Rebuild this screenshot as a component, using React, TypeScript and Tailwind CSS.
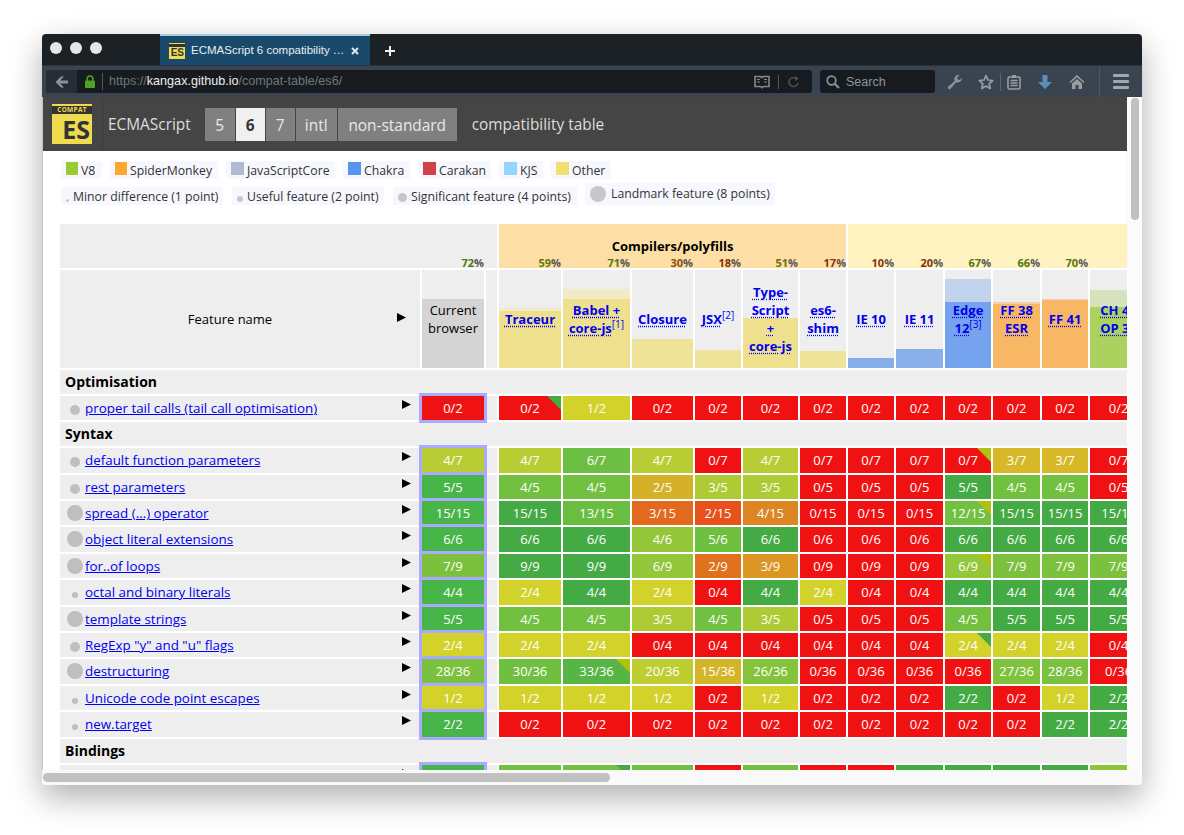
import { Fragment } from 'react'

type Dot = 'sm' | 'md' | 'lg'

type Column = {
	lines: string[]
	sup?: string
	solid: number
	light?: number
	barColor: string
	lightColor?: string
	percent?: number
}

const columns: Column[] = [
	{ lines: ['Traceur'], solid: 57, light: 60, barColor: '#eee08d', lightColor: '#f1ebc9', percent: 59 },
	{ lines: ['Babel +', 'core-js'], sup: '[1]', solid: 69, light: 79, barColor: '#eee08d', lightColor: '#f1ebc9', percent: 71 },
	{ lines: ['Closure'], solid: 29, barColor: '#eee399', percent: 30 },
	{ lines: ['JSX'], sup: '[2]', solid: 18, barColor: '#eee399', percent: 18 },
	{ lines: ['Type-', 'Script', '+', 'core-js'], solid: 50, barColor: '#eee08d', percent: 51 },
	{ lines: ['es6-', 'shim'], solid: 17, barColor: '#eee399', percent: 17 },
	{ lines: ['IE 10'], solid: 10, barColor: '#86aeea', percent: 10 },
	{ lines: ['IE 11'], solid: 19, barColor: '#8ab0ec', percent: 20 },
	{ lines: ['Edge', '12'], sup: '[3]', solid: 66, light: 89, barColor: '#76a3ee', lightColor: '#c2d3ee', percent: 67 },
	{ lines: ['FF 38', 'ESR'], solid: 64, light: 66, barColor: '#f7b765', lightColor: '#f3d0aa', percent: 66 },
	{ lines: ['FF 41'], solid: 68, light: 69, barColor: '#f7b765', lightColor: '#f3d0aa', percent: 70 },
	{ lines: ['CH 43', 'OP 32'], solid: 61, light: 78, barColor: '#abd25f', lightColor: '#d6e2bb' }
]

type Row = {
	name: string
	dot: Dot
	height: string
	current: string
	scores: string
}

// * = yellow corner flag, ^ = green corner flag
const optimisation: Row[] = [
	{ name: 'proper tail calls (tail call optimisation)', dot: 'md', height: 'h-[24px]', current: '0/2', scores: '0/2^ 1/2 0/2 0/2 0/2 0/2 0/2 0/2 0/2 0/2 0/2 0/2' }
]

const syntax: Row[] = [
	{ name: 'default function parameters', dot: 'md', height: 'h-[25px]', current: '4/7', scores: '4/7 6/7 4/7 0/7 4/7 0/7 0/7 0/7 0/7* 3/7 3/7 0/7' },
	{ name: 'rest parameters', dot: 'md', height: 'h-[24px]', current: '5/5', scores: '4/5 4/5 2/5 3/5 3/5 0/5 0/5 0/5 5/5 4/5 4/5 0/5' },
	{ name: 'spread (...) operator', dot: 'lg', height: 'h-[24px]', current: '15/15', scores: '15/15 13/15 3/15 2/15 4/15 0/15 0/15 0/15 12/15* 15/15 15/15 15/15' },
	{ name: 'object literal extensions', dot: 'lg', height: 'h-[25px]', current: '6/6', scores: '6/6 6/6 4/6 5/6 6/6 0/6 0/6 0/6 6/6 6/6 6/6 6/6' },
	{ name: 'for..of loops', dot: 'lg', height: 'h-[24px]', current: '7/9', scores: '9/9 9/9 6/9 2/9 3/9 0/9 0/9 0/9 6/9* 7/9 7/9 7/9' },
	{ name: 'octal and binary literals', dot: 'sm', height: 'h-[25px]', current: '4/4', scores: '2/4 4/4 2/4 0/4 4/4 2/4 0/4 0/4 4/4 4/4 4/4 4/4' },
	{ name: 'template strings', dot: 'lg', height: 'h-[24px]', current: '5/5', scores: '4/5 4/5 3/5 4/5 3/5 0/5 0/5 0/5 4/5 5/5 5/5 5/5' },
	{ name: 'RegExp "y" and "u" flags', dot: 'md', height: 'h-[24px]', current: '2/4', scores: '2/4 2/4 0/4 0/4 0/4 0/4 0/4 0/4 2/4^ 2/4 2/4 0/4' },
	{ name: 'destructuring', dot: 'lg', height: 'h-[25px]', current: '28/36', scores: '30/36 33/36* 20/36 15/36 26/36 0/36 0/36 0/36 0/36 27/36 28/36 0/36' },
	{ name: 'Unicode code point escapes', dot: 'sm', height: 'h-[24px]', current: '1/2', scores: '1/2 1/2 1/2 0/2 1/2 0/2 0/2 0/2 2/2 0/2 1/2 2/2' },
	{ name: 'new.target', dot: 'sm', height: 'h-[25px]', current: '2/2', scores: '0/2 0/2 0/2 0/2 0/2 0/2 0/2 0/2 0/2 0/2 2/2 2/2' }
]

const bindings: Row[] = [
	{ name: 'const', dot: 'sm', height: 'h-[25px]', current: '16/16', scores: '13/16 13/16^ 13/16 0/16 13/16 0/16 0/16 16/16 16/16 16/16 16/16 11/16' }
]

const stops: [number, string][] = [
	[0, '#f01212'],
	[0.13, '#e84f1c'],
	[0.22, '#e0711e'],
	[0.27, '#dd8622'],
	[0.33, '#db9524'],
	[0.4, '#d4b128'],
	[0.43, '#d6b828'],
	[0.5, '#d3d22a'],
	[0.57, '#b8cd33'],
	[0.6, '#aecb35'],
	[0.67, '#92c638'],
	[0.72, '#85c33c'],
	[0.78, '#7cc13d'],
	[0.8, '#72c040'],
	[0.86, '#6cbf42'],
	[0.92, '#55b445'],
	[1, '#44aa44']
]

function toRgb(hex: string) {
	return [1, 3, 5].map((i) => parseInt(hex.slice(i, i + 2), 16))
}

function scoreColor(ratio: number, current?: boolean) {
	if (ratio === 1) return current ? '#48b549' : '#44aa44'
	for (let i = 1; i < stops.length; i++) {
		const [to, toHex] = stops[i]
		const [from, fromHex] = stops[i - 1]
		if (ratio <= to) {
			const t = (ratio - from) / (to - from)
			const a = toRgb(fromHex)
			const b = toRgb(toHex)
			return `rgb(${a.map((v, n) => Math.round(v + (b[n] - v) * t)).join(',')})`
		}
	}
	return '#44aa44'
}

function percentColor(p: number) {
	if (p < 25) return '#85300f'
	if (p < 40) return '#85500f'
	if (p < 55) return '#6f6a0c'
	if (p < 65) return '#5f780d'
	return '#4c780d'
}

function PercentLabel({ value }: { value: number }) {
	return (
		<span className="absolute right-0 top-[-13px] text-[11px] leading-[12px] font-bold text-[#555]">
			<span style={{ color: percentColor(value) }}>{value}</span>%
		</span>
	)
}

function Triangle({ className }: { className: string }) {
	return (
		<svg className={className} width="9" height="9" viewBox="0 0 9 9">
			<polygon points="0,0 9,4.5 0,9" fill="#000" />
		</svg>
	)
}

function ScoreCell({ score, current }: { score: string; current?: boolean }) {
	const flag = score.endsWith('*') ? '#aec20e' : score.endsWith('^') ? '#46aa46' : null
	const text = flag ? score.slice(0, -1) : score
	const [got, total] = text.split('/').map(Number)
	return (
		<td
			className={`relative p-0 pt-[3px] align-top text-center text-[13px] leading-[18px] text-white ${current ? 'outline-3 outline-[#aaaaff]' : ''}`}
			style={{ backgroundColor: scoreColor(got / total, current) }}
		>
			{flag && (
				<svg className="absolute right-0 top-0" width="14" height="14" viewBox="0 0 14 14">
					<polygon points="0,0 14,0 14,14" fill={flag} />
				</svg>
			)}
			{text}
		</td>
	)
}

const dotClass: Record<Dot, string> = {
	sm: 'w-[6px] h-[6px] mb-[3px]',
	md: 'w-[10px] h-[10px] mb-[2px]',
	lg: 'w-[16px] h-[16px] mb-[1px]'
}

function FeatureRow({ row }: { row: Row }) {
	return (
		<tr className={row.height}>
			<td className="relative p-0 pt-[3px] align-top bg-[#eeeeee]">
				<div className="flex items-center">
					<span className="w-[20px] ml-[5px] flex justify-center self-end">
						<span className={`block rounded-full bg-[#bfbfbf] ${dotClass[row.dot]}`} />
					</span>
					<a href="#" className="text-[13.4px] leading-[18px] text-[#0000ee] underline">
						{row.name}
					</a>
				</div>
				<Triangle className="absolute right-[9px] top-[4px]" />
			</td>
			<ScoreCell score={row.current} current />
			<td className="p-0 bg-[#eeeeee]" />
			{row.scores.split(' ').map((score, i) => (
				<ScoreCell key={i} score={score} />
			))}
		</tr>
	)
}

function SectionRow({ title }: { title: string }) {
	return (
		<tr className="h-[24px]">
			<td colSpan={15} className="p-0 pl-[5px] bg-[#eeeeee] text-[14px] leading-[18px] font-bold text-black">
				{title}
			</td>
		</tr>
	)
}

function HeaderCell({ col }: { col: Column }) {
	return (
		<th className="relative p-0 bg-[#eeeeee] font-bold text-[13px] leading-[18px]">
			{col.percent && <PercentLabel value={col.percent} />}
			{col.light && <div className="absolute inset-x-0 bottom-0" style={{ height: col.light, backgroundColor: col.lightColor }} />}
			<div className="absolute inset-x-0 bottom-0" style={{ height: col.solid, backgroundColor: col.barColor }} />
			<div className="relative whitespace-nowrap">
				{col.lines.map((line, i) => (
					<Fragment key={line}>
						<a href="#" className="text-[#0000ee] underline decoration-dotted underline-offset-2">
							{line}
						</a>
						{col.sup && i === col.lines.length - 1 && (
							<sup className="font-normal text-[10px] leading-none text-[#0000ee]">{col.sup}</sup>
						)}
						<br />
					</Fragment>
				))}
			</div>
		</th>
	)
}

function CompatTable() {
	return (
		<table className="table-fixed border-separate border-spacing-[2px] w-[1091px] ml-[-2px] font-['Open_Sans',sans-serif]">
			<colgroup>
				<col className="w-[360px]" />
				<col className="w-[62px]" />
				<col className="w-[11px]" />
				<col className="w-[62px]" />
				<col className="w-[67px]" />
				<col className="w-[61px]" />
				<col className="w-[46px]" />
				<col className="w-[55px]" />
				<col className="w-[46px]" />
				<col className="w-[46px]" />
				<col className="w-[47px]" />
				<col className="w-[46px]" />
				<col className="w-[47px]" />
				<col className="w-[46px]" />
				<col className="w-[57px]" />
			</colgroup>
			<thead>
				<tr className="h-[44px]">
					<th colSpan={3} className="p-0 bg-[#eeeeee]" />
					<th colSpan={6} className="p-0 bg-[#fddfa5] text-[13px] leading-[16px] font-bold text-black">
						Compilers/polyfills
					</th>
					<th colSpan={6} className="p-0 bg-[#fef3c0]" />
				</tr>
				<tr className="h-[98px]">
					<th className="relative p-0 pr-[20px] pt-[1px] bg-[#eeeeee] text-[13px] font-normal text-black">
						Feature name
						<Triangle className="absolute right-[14px] top-[43px]" />
					</th>
					<th className="relative p-0 bg-[#eeeeee] text-[13px] leading-[18px] font-normal text-black">
						<PercentLabel value={72} />
						<div className="absolute inset-x-0 bottom-0 h-[69px] bg-[#d4d4d4]" />
						<div className="relative">
							Current
							<br />
							browser
						</div>
					</th>
					<th className="p-0 bg-[#eeeeee]" />
					{columns.map((col) => (
						<HeaderCell key={col.lines[0]} col={col} />
					))}
				</tr>
			</thead>
			<tbody>
				<SectionRow title="Optimisation" />
				{optimisation.map((row) => (
					<FeatureRow key={row.name} row={row} />
				))}
				<SectionRow title="Syntax" />
				{syntax.map((row) => (
					<FeatureRow key={row.name} row={row} />
				))}
				<SectionRow title="Bindings" />
				{bindings.map((row) => (
					<FeatureRow key={row.name} row={row} />
				))}
			</tbody>
		</table>
	)
}

const engines = [
	{ label: 'V8', color: 'bg-[#99cc33] w-[12px]', width: 'w-[41px]' },
	{ label: 'SpiderMonkey', color: 'bg-[#ffa733] w-[12px]', width: 'w-[108px]' },
	{ label: 'JavaScriptCore', color: 'bg-[#b1b9d3] w-[13px]', width: 'w-[109px]' },
	{ label: 'Chakra', color: 'bg-[#5595ee] w-[13px]', width: 'w-[67px]' },
	{ label: 'Carakan', color: 'bg-[#d14148] w-[13px]', width: 'w-[73px]' },
	{ label: 'KJS', color: 'bg-[#93d5ff] w-[13px]', width: 'w-[44px]' },
	{ label: 'Other', color: 'bg-[#f1df70] w-[13px]', width: 'w-[60px]' }
]

const weights = [
	{ label: 'Minor difference (1 point)', dot: 'w-[3px] h-[3px]', width: 'w-[162px]' },
	{ label: 'Useful feature (2 point)', dot: 'w-[6px] h-[6px]', width: 'w-[152px]' },
	{ label: 'Significant feature (4 points)', dot: 'w-[9px] h-[9px]', width: 'w-[184px]' }
]

function Legend() {
	return (
		<div className="pt-[10px] pl-[18px] text-[12.25px] text-[#333] font-['Open_Sans',sans-serif]">
			<div className="flex gap-[8px]">
				{engines.map((item) => (
					<div key={item.label} className={`flex h-[18px] gap-[3px] pl-[5px] bg-[#f7f8fd] leading-[20px] whitespace-nowrap ${item.width}`}>
						<span className={`mt-[1px] h-[13px] ${item.color}`} />
						{item.label}
					</div>
				))}
			</div>
			<div className="flex items-end mt-[4px] h-[22px] gap-[9px]">
				{weights.map((item) => (
					<div key={item.label} className={`flex items-start gap-[4px] h-[18px] pl-[5px] bg-[#f7f8fd] leading-[20px] whitespace-nowrap ${item.width}`}>
						<span className={`self-end mb-[3px] rounded-full bg-[#c8c6cc] ${item.dot}`} />
						{item.label}
					</div>
				))}
				<div className="flex items-center gap-[5px] h-[22px] w-[190px] ml-[-1px] pl-[5px] bg-[#f7f8fd] whitespace-nowrap">
					<span className="w-[16px] h-[16px] rounded-full bg-[#c8c6cc]" />
					Landmark feature (8 points)
				</div>
			</div>
		</div>
	)
}

function SiteHeader() {
	const tabs = [
		{ label: '5', width: 'w-[30px]' },
		{ label: '6', width: 'w-[29px]', active: true },
		{ label: '7', width: 'w-[29px]' },
		{ label: 'intl', width: 'w-[41px]' },
		{ label: 'non-standard', width: 'w-[119px]' }
	]
	return (
		<div className="flex items-center h-[54px] bg-[#454545] font-['Open_Sans',sans-serif] text-[15.4px] text-[#dddddd]">
			<div className="flex items-center h-full w-[60px] pl-[9px] border-r border-[#3b3b3b]">
				<div className="w-[40px] h-[40px] bg-[#f0db4f] pt-[2px]">
					<div className="h-[8px] bg-[#333] text-center text-[6.5px] leading-[8px] font-bold text-[#f0db4f] tracking-[0.3px]">COMPAT</div>
					<div className="text-right pr-[2px] text-[25px] leading-[30px] font-bold text-[#333]">ES</div>
				</div>
			</div>
			<span className="ml-[5px] pt-[2px]">ECMAScript</span>
			<div className="flex gap-[1px] ml-[14px]">
				{tabs.map((tab) => (
					<span
						key={tab.label}
						className={`${tab.width} h-[33px] leading-[36px] text-center ${tab.active ? 'bg-[#f0f0f0] text-[#333] font-bold' : 'bg-[#808080] text-[#e8e8e8]'}`}
					>
						{tab.label}
					</span>
				))}
			</div>
			<span className="ml-[15px] pt-[2px]">compatibility table</span>
		</div>
	)
}

function TitleBar() {
	return (
		<div className="flex h-[31px] bg-[#1c2126] rounded-t-[4px] font-['Liberation_Sans',sans-serif]">
			<div className="flex items-center gap-[8px] w-[118px] pl-[8px] pb-[3px]">
				<span className="w-[12px] h-[12px] rounded-full bg-[#e6e6e6]" />
				<span className="w-[12px] h-[12px] rounded-full bg-[#e6e6e6]" />
				<span className="w-[12px] h-[12px] rounded-full bg-[#e6e6e6]" />
			</div>
			<div className="flex items-center w-[210px] pl-[9px] bg-[#1a4a6b] border-t-2 border-[#a9cbe0]">
				<div className="w-[16px] h-[16px] bg-[#f0db4f] pt-[1px] overflow-hidden">
					<div className="h-[3px] bg-[#333]" />
					<div className="text-right pr-[1px] text-[10px] leading-[12px] font-bold text-[#333]">ES</div>
				</div>
				<span className="ml-[6px] w-[152px] text-[11.5px] text-[#e8eef2] whitespace-nowrap">ECMAScript 6 compatibility …</span>
				<svg className="ml-[8px]" width="8" height="8" viewBox="0 0 8 8">
					<path d="M1 1l6 6M7 1 1 7" stroke="#e0e6ea" strokeWidth="2" />
				</svg>
			</div>
			<svg className="ml-[14px] self-center mt-[2px]" width="12" height="12" viewBox="0 0 12 12">
				<path d="M6 1v10M1 6h10" stroke="#f0f0f0" strokeWidth="2" />
			</svg>
		</div>
	)
}

function ToolBar() {
	return (
		<div className="flex items-center h-[32px] pl-[4px] bg-[#3a4350] border-t border-[#2c333c] font-['Liberation_Sans',sans-serif]">
			<div className="flex items-center w-[766px] h-[23px] rounded-[3px] bg-[#171b1f] overflow-hidden">
				<div className="flex items-center justify-center w-[31px] h-full bg-[#262d36]">
					<svg width="13" height="12" viewBox="0 0 13 12">
						<path d="M6 0.5 0.5 6 6 11.500h3L5.200 7.600H13V4.400H5.200L9 0.500z" fill="#8d9298" />
					</svg>
				</div>
				<svg className="ml-[8px]" width="10" height="13" viewBox="0 0 10 13">
					<path d="M2.200 6V3.800a2.800 2.800 0 0 1 5.600 0V6" fill="none" stroke="#4fa224" strokeWidth="1.600" />
					<rect x="0" y="5.500" width="10" height="7.500" rx="1" fill="#4fa224" />
				</svg>
				<span className="ml-[7px] w-px h-[17px] bg-[#50565c]" />
				<span className="ml-[6px] text-[12.6px] text-[#70777d] whitespace-nowrap">
					https://<span className="text-[#eeeeee]">kangax.github.io</span>/compat-table/es6/
				</span>
				<span className="flex-1" />
				<svg width="16" height="14" viewBox="0 0 16 14">
					<path d="M1 1.500h5.500L8 2.500l1.500-1H15v10H9.500L8 12.800 6.500 11.500H1z" fill="none" stroke="#858a90" strokeWidth="1.600" />
					<path d="M3 4.500h3M3 7h3M10 4.500h3M10 7h3" stroke="#858a90" />
				</svg>
				<span className="ml-[8px] w-px h-[14px] bg-[#50565c]" />
				<svg className="ml-[9px] mr-[12px]" width="12" height="12" viewBox="0 0 12 12">
					<path d="M10 6.500A4.500 4.500 0 1 1 7.500 2" fill="none" stroke="#4a4f55" strokeWidth="1.600" />
					<path d="M7 0v5l4-2.500z" fill="#4a4f55" />
				</svg>
			</div>
			<div className="flex items-center ml-[8px] w-[115px] h-[23px] rounded-[3px] bg-[#171b1f]">
				<svg className="ml-[6px]" width="14" height="14" viewBox="0 0 14 14">
					<circle cx="5.500" cy="5.500" r="4.300" fill="none" stroke="#8d9298" strokeWidth="1.700" />
					<path d="M8.700 8.700 13 13" stroke="#8d9298" strokeWidth="2.200" />
				</svg>
				<span className="ml-[6px] pt-[1px] text-[12.5px] text-[#8b95a0]">Search</span>
			</div>
			<svg className="ml-[12px]" width="16" height="16" viewBox="0 0 16 16">
				<path d="M15 4.300a4.300 4.300 0 0 1-5.800 4L3.500 14.700a1.500 1.500 0 0 1-2.200-2.100l6.400-5.700A4.300 4.300 0 0 1 12.600 1L10.200 3.400l.5 2.100 2.100.5L15 3.800z" fill="#8d9298" />
			</svg>
			<svg className="ml-[15px]" width="16" height="16" viewBox="0 0 16 16">
				<path d="M8 1.500 10 6l4.800.5-3.600 3.200 1 4.800L8 12.100l-4.200 2.400 1-4.800L1.200 6.500 6 6z" fill="none" stroke="#9a9ea3" strokeWidth="1.700" strokeLinejoin="round" />
			</svg>
			<span className="ml-[6px] w-px h-[18px] bg-[#5b6470]" />
			<svg className="ml-[5px]" width="16" height="16" viewBox="0 0 16 16">
				<rect x="2" y="3" width="12" height="12" rx="1.500" fill="none" stroke="#9a9ea3" strokeWidth="1.600" />
				<path d="M4.500 6.500h7M4.500 9h7M4.500 11.500h7" stroke="#9a9ea3" strokeWidth="1.300" />
				<rect x="6" y="1" width="4" height="3" fill="#9a9ea3" />
			</svg>
			<svg className="ml-[15px]" width="16" height="16" viewBox="0 0 16 16">
				<path d="M5.500 1h5v7H15l-7 7-7-7h4.500z" fill="#5b8fb9" />
			</svg>
			<svg className="ml-[16px]" width="16" height="16" viewBox="0 0 16 16">
				<path d="M8 1 0.500 8l1 1L8 3.200 14.500 9l1-1z" fill="#9a9ea3" />
				<path d="M3 9.500 8 5l5 4.500V15H9.500v-4h-3v4H3z" fill="#9a9ea3" />
			</svg>
			<span className="ml-[14px] w-px h-[30px] bg-[#4f5965]" />
			<div className="ml-[13px] flex flex-col gap-[3px]">
				<span className="w-[16px] h-[3px] rounded-[1px] bg-[#a3a6aa]" />
				<span className="w-[16px] h-[3px] rounded-[1px] bg-[#a3a6aa]" />
				<span className="w-[16px] h-[3px] rounded-[1px] bg-[#a3a6aa]" />
			</div>
		</div>
	)
}

export default function App() {
	return (
		<div className="w-[1184px] h-[835px] overflow-hidden bg-white pt-[34px] pl-[42px]">
			<div className="flex flex-col w-[1100px] h-[751px] rounded-[4px] bg-white shadow-[0_12px_32px_rgba(0,0,0,0.32)]">
				<TitleBar />
				<ToolBar />
				<div className="flex h-[673px] border-l border-[#c4c4c4]">
					<div className="w-[1084px] overflow-hidden">
						<SiteHeader />
						<Legend />
						<div className="mt-[17px] pl-[17px]">
							<CompatTable />
						</div>
					</div>
					<div className="w-[15px] bg-[#fbfbfb] pt-[1px] pl-[4px]">
						<div className="w-[8px] h-[122px] rounded-full bg-[#c1c1c1]" />
					</div>
				</div>
				<div className="h-[15px] bg-[#f9f9f9] rounded-b-[4px] pt-[3px] pl-[1px]">
					<div className="w-[567px] h-[9px] rounded-full bg-[#c1c1c1]" />
				</div>
			</div>
		</div>
	)
}
